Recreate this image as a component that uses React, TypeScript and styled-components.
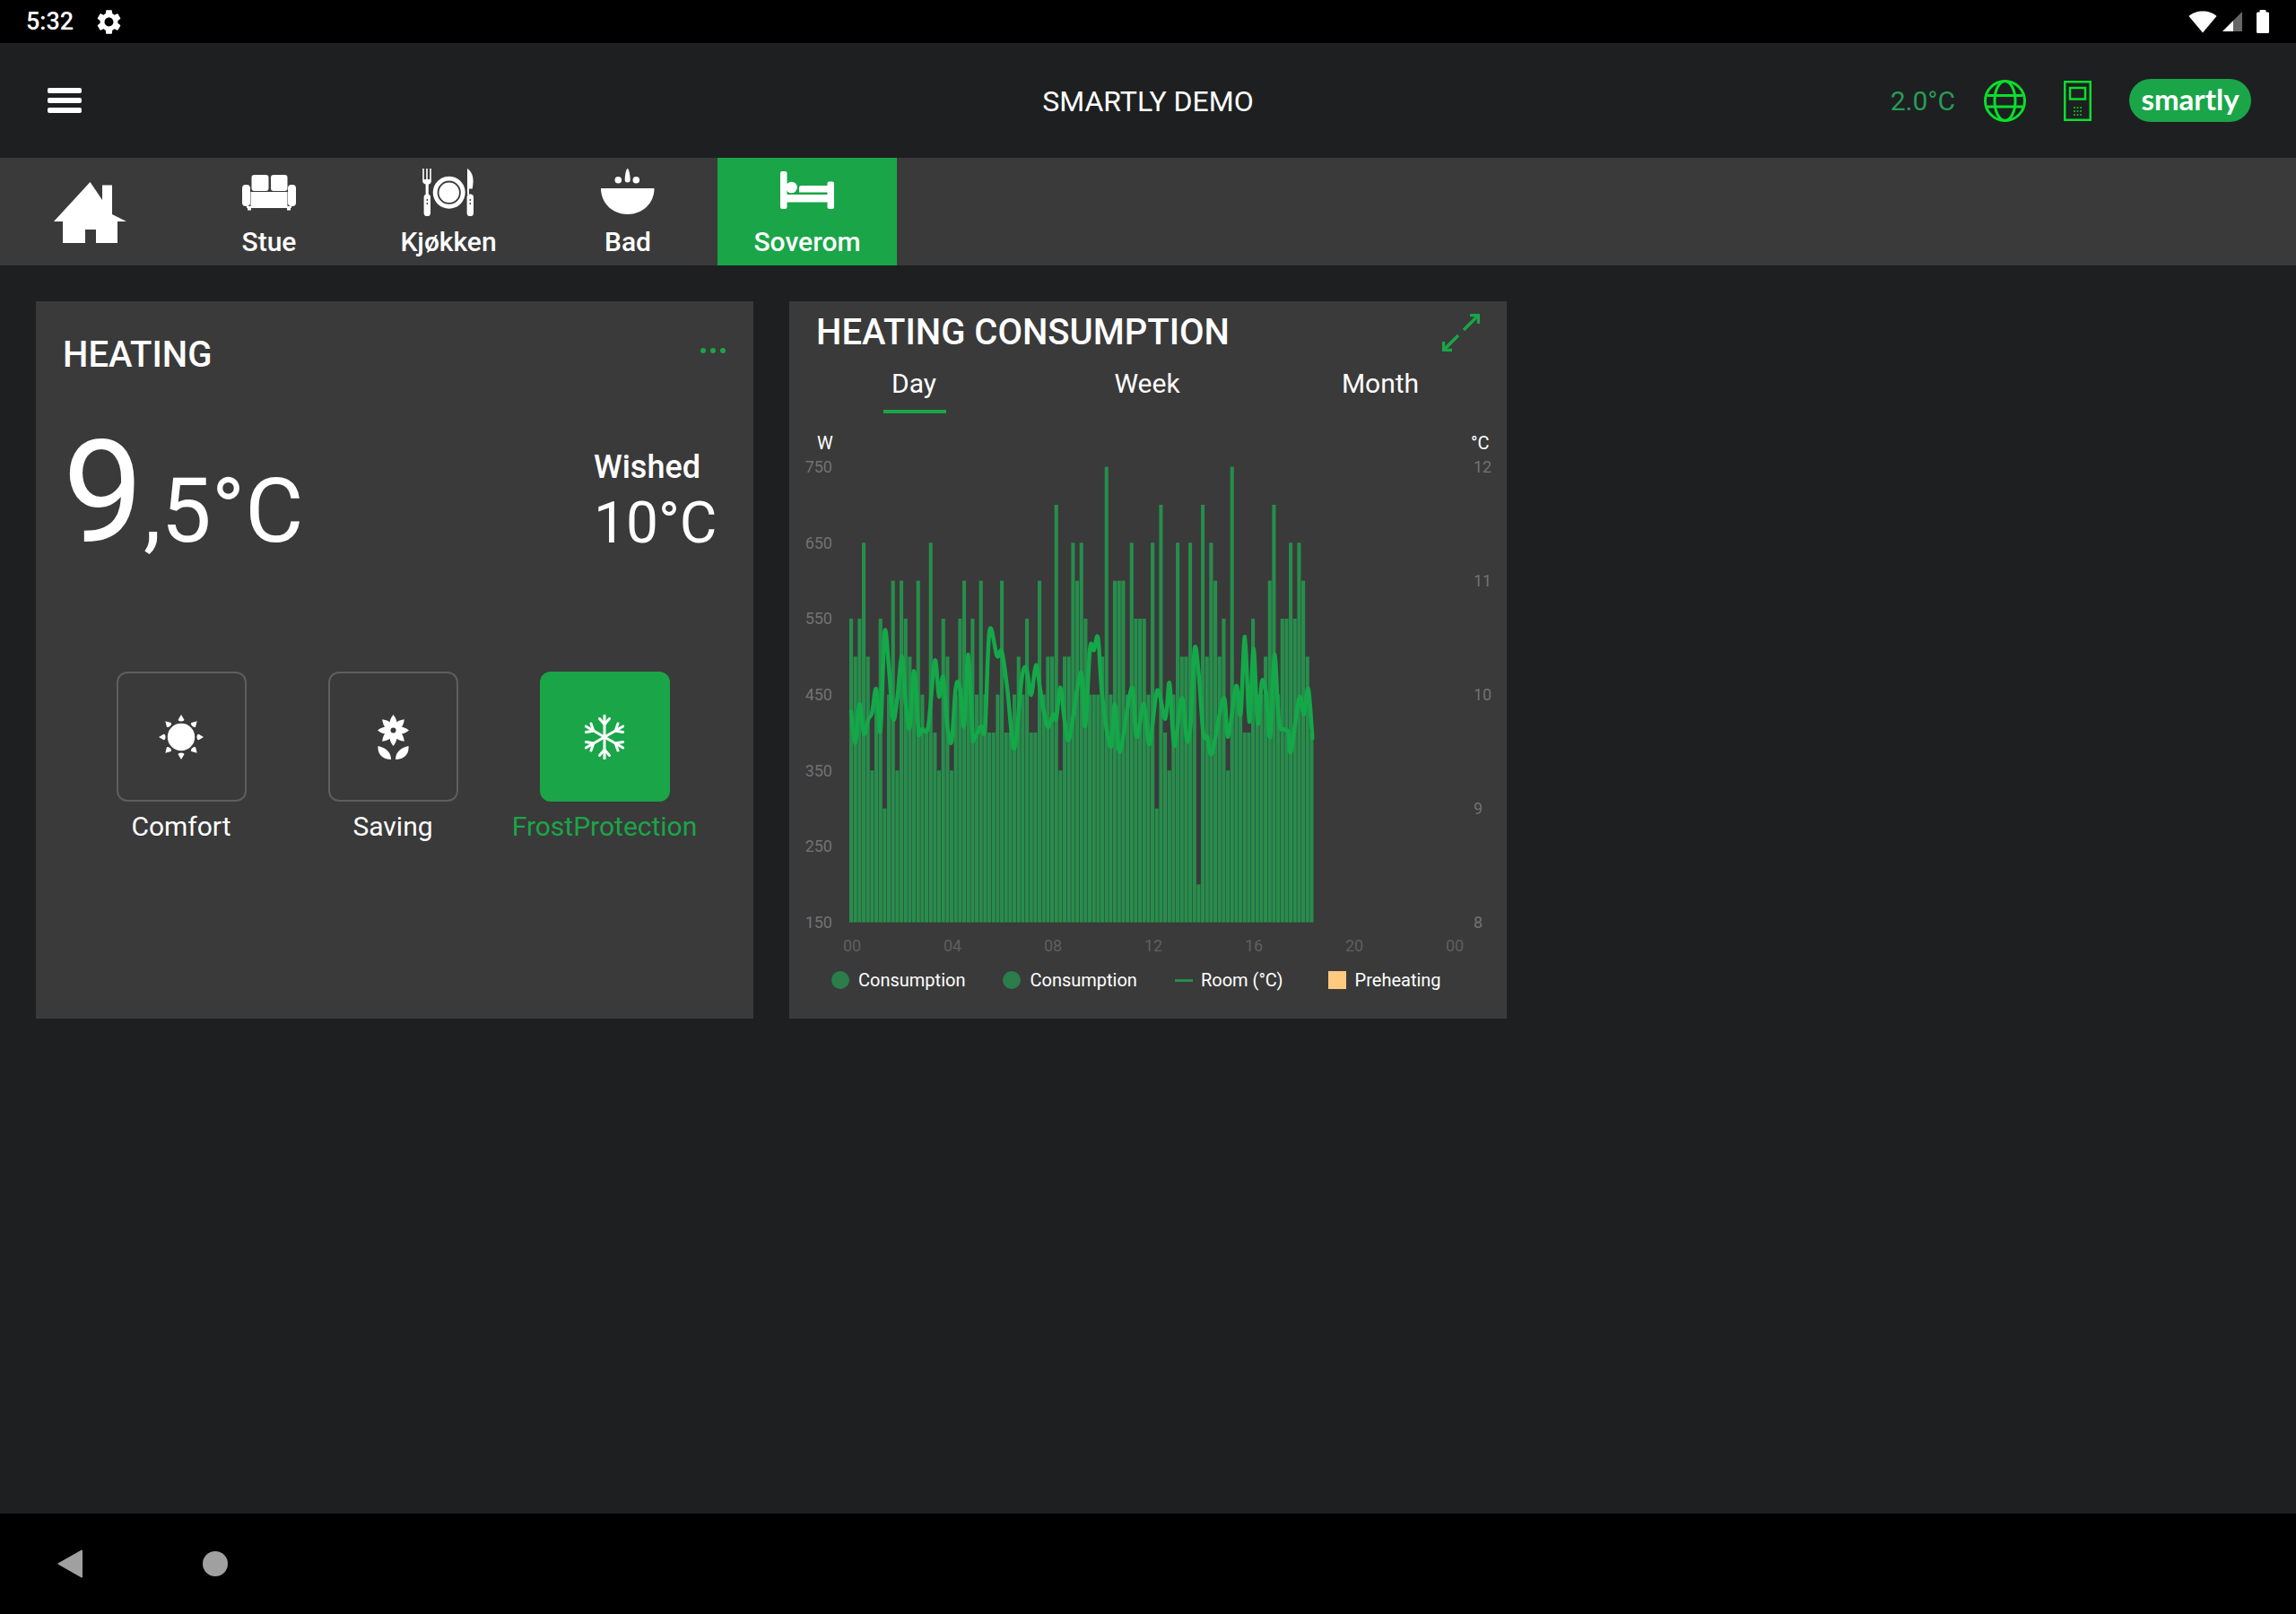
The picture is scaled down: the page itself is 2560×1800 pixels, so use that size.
import React from "react";
import styled, { createGlobalStyle } from "styled-components";

const GREEN = "#1aa548";
const NEON = "#0adf2c";
const CARD = "#3a3a3a";
const PAGE = "#1e1f21";

const Global = createGlobalStyle`
  html, body { margin: 0; padding: 0; background: ${PAGE}; }
  body { font-family: Roboto, "Liberation Sans", sans-serif; color: #fff; }
  * { box-sizing: border-box; }
`;

const Screen = styled.div`
  width: 2560px;
  height: 1800px;
  display: flex;
  flex-direction: column;
  background: ${PAGE};
  overflow: hidden;
`;

/* ---------- status bar ---------- */
const StatusBar = styled.div`
  height: 48px;
  background: #000;
  display: flex;
  align-items: center;
  padding: 0 30px 0 29px;
`;
const Clock = styled.span`
  font-size: 27px;
  font-weight: 500;
  line-height: 48px;
  width: 60px;
`;
const StatusLeft = styled.div`
  display: flex;
  align-items: center;
  gap: 16px;
  flex: 1;
`;
const StatusRight = styled.div`
  display: flex;
  align-items: center;
`;
const WifiSvg = styled.svg`
  width: 32px;
  height: 25px;
  margin-right: 6px;
`;
const SignalSvg = styled.svg`
  width: 22px;
  height: 22px;
  margin-right: 16px;
`;
const BatterySvg = styled.svg`
  width: 14px;
  height: 26px;
`;

/* ---------- app bar ---------- */
const AppBar = styled.header`
  height: 128px;
  display: grid;
  grid-template-columns: 1fr auto 1fr;
  align-items: center;
  padding: 0 50px;
`;
const Burger = styled.div`
  display: flex;
  flex-direction: column;
  gap: 5px;
  width: 38px;
  margin-left: 3px;
`;
const BurgerBar = styled.span`
  display: block;
  height: 6px;
  border-radius: 2px;
  background: #fff;
`;
const AppTitle = styled.h1`
  margin: 2px 0 0;
  font-size: 32px;
  font-weight: 400;
  line-height: 40px;
`;
const AppActions = styled.div`
  display: flex;
  align-items: center;
  justify-content: flex-end;
`;
const OutdoorTemp = styled.span`
  font-size: 30px;
  color: #279c55;
  margin-right: 32px;
`;
const GlobeSvg = styled.svg`
  width: 47px;
  height: 47px;
  margin-right: 42px;
`;
const DeviceSvg = styled.svg`
  width: 31px;
  height: 45px;
  margin-right: 42px;
`;
const LogoPill = styled.div`
  width: 136px;
  height: 48px;
  border-radius: 24px;
  background: ${GREEN};
  display: flex;
  align-items: center;
  justify-content: center;
  font-family: Lato, Roboto, sans-serif;
  font-weight: 700;
  font-size: 33px;
  line-height: 48px;
  padding-bottom: 5px;
`;

/* ---------- room tabs ---------- */
const RoomBar = styled.nav`
  height: 120px;
  background: ${CARD};
  display: flex;
`;
const RoomTab = styled.div<{ $active?: boolean }>`
  width: 200px;
  display: flex;
  flex-direction: column;
  align-items: center;
  padding-top: 10px;
  background: ${(p) => (p.$active ? GREEN : "transparent")};
`;
const HomeTab = styled(RoomTab)`
  padding-top: 0;
  justify-content: center;
`;
const RoomIcon = styled.svg`
  width: 60px;
  height: 56px;
`;
const HomeIcon = styled.svg`
  width: 81px;
  height: 68px;
  margin-top: 2px;
`;
const RoomLabel = styled.span`
  margin-top: 8px;
  font-size: 30px;
  font-weight: 500;
  line-height: 40px;
`;

/* ---------- content ---------- */
const Content = styled.main`
  flex: 1;
  display: flex;
  align-items: flex-start;
  gap: 40px;
  padding: 40px;
`;
const Card = styled.section`
  width: 800px;
  height: 800px;
  background: ${CARD};
  display: flex;
  flex-direction: column;
`;
const HeatingHead = styled.div`
  display: flex;
  justify-content: space-between;
  margin-top: 36px;
  padding: 0 31px 0 30px;
`;
const CardTitle = styled.h2`
  margin: 0;
  font-size: 40px;
  font-weight: 500;
  line-height: 48px;
`;
const Dots = styled.div`
  display: flex;
  gap: 5px;
  padding-top: 16px;
`;
const Dot = styled.span`
  width: 6px;
  height: 6px;
  border-radius: 50%;
  background: ${GREEN};
`;
const TempRow = styled.div`
  display: flex;
  align-items: flex-end;
  margin-top: 50px;
  padding-left: 30px;
`;
const Current = styled.div`
  font-size: 160px;
  line-height: 160px;
  font-weight: 400;
  white-space: nowrap;
`;
const CurrentRest = styled.span`
  font-size: 100px;
  line-height: 100px;
`;
const Wish = styled.div`
  margin-left: auto;
  width: 178px;
  margin-bottom: 14px;
`;
const WishLabel = styled.div`
  font-size: 36px;
  font-weight: 500;
  line-height: 36px;
  margin-bottom: 13px;
`;
const WishValue = styled.div`
  font-size: 64px;
  font-weight: 400;
  line-height: 64px;
`;
const ModeRow = styled.div`
  display: grid;
  grid-template-columns: repeat(3, 236px);
  margin-top: 119px;
  padding-left: 44px;
`;
const Mode = styled.div`
  display: flex;
  flex-direction: column;
  align-items: center;
`;
const ModeBox = styled.div<{ $active?: boolean }>`
  width: 145px;
  height: 145px;
  border-radius: 12px;
  border: ${(p) => (p.$active ? "none" : "2.5px solid #5e5e5e")};
  background: ${(p) => (p.$active ? GREEN : "transparent")};
  display: flex;
  align-items: center;
  justify-content: center;
`;
const ModeLabel = styled.span<{ $active?: boolean }>`
  margin-top: 8px;
  font-size: 30px;
  line-height: 40px;
  color: ${(p) => (p.$active ? GREEN : "#fff")};
  white-space: nowrap;
`;
const SunSvg = styled.svg`
  width: 50px;
  height: 50px;
`;
const FlowerSvg = styled.svg`
  width: 35px;
  height: 50px;
`;
const SnowSvg = styled.svg`
  width: 44px;
  height: 50px;
`;

/* ---------- consumption card ---------- */
const ChartHead = styled.div`
  display: flex;
  justify-content: space-between;
  align-items: flex-start;
  padding: 11px 30px 0 30px;
  height: 62px;
`;
const ExpandSvg = styled.svg`
  width: 42px;
  height: 42px;
  margin-top: 3px;
`;
const RangeTabs = styled.div`
  display: grid;
  grid-template-columns: repeat(3, 260px);
  padding-left: 9px;
  height: 72px;
`;
const RangeTab = styled.div`
  display: flex;
  flex-direction: column;
  align-items: center;
`;
const RangeLabel = styled.span`
  font-size: 30px;
  line-height: 60px;
`;
const RangeMark = styled.span`
  width: 70px;
  height: 3.5px;
  margin-top: -1px;
  margin-left: 2px;
  background: ${GREEN};
`;
const ChartSvg = styled.svg`
  display: block;
  width: 800px;
  height: 610px;
`;
const AxisUnit = styled.text`
  font-size: 20px;
  fill: #fff;
  dominant-baseline: central;
`;
const AxisValue = styled.text`
  font-size: 18px;
  fill: #727272;
  dominant-baseline: central;
`;
const AxisHour = styled(AxisValue)`
  fill: #5f5f5f;
  text-anchor: middle;
`;
const Legend = styled.div`
  display: flex;
  align-items: center;
  gap: 42px;
  padding-left: 47px;
  margin-top: -2px;
  height: 30px;
`;
const LegendItem = styled.div`
  display: flex;
  align-items: center;
  gap: 10px;
  font-size: 20px;
  line-height: 30px;
  white-space: nowrap;
`;
const LastLegendItem = styled(LegendItem)`
  margin-left: 8px;
`;
const LegendDot = styled.span`
  width: 20px;
  height: 20px;
  border-radius: 50%;
  background: #2b7d4b;
`;
const LegendLine = styled.span`
  width: 20px;
  height: 3px;
  margin-right: -1px;
  background: #2a8a4c;
`;
const LegendSquare = styled.span`
  width: 20px;
  height: 20px;
  background: #fdca80;
`;

/* ---------- nav bar ---------- */
const NavBar = styled.footer`
  height: 112px;
  background: #000;
  display: flex;
  align-items: center;
  padding-left: 64px;
  gap: 134px;
`;
const BackSvg = styled.svg`
  width: 28px;
  height: 32px;
`;
const HomeDot = styled.span`
  width: 28px;
  height: 28px;
  border-radius: 50%;
  background: #a0a0a0;
`;

/* ---------- data ---------- */
const BARS = [
  550, 500, 550, 650, 500, 350, 450, 550, 300, 450, 600, 350, 600, 550, 500, 450, 600, 450, 400, 650,
  400, 350, 550, 500, 350, 450, 550, 600, 500, 550, 450, 600, 450, 400, 400, 450, 600, 400, 400, 450,
  500, 450, 550, 400, 400, 600, 450, 500, 500, 700, 350, 500, 500, 650, 600, 650, 550, 450, 450, 450,
  500, 750, 450, 600, 600, 600, 450, 650, 550, 550, 550, 450, 650, 300, 700, 400, 350, 450, 650, 500,
  500, 650, 500, 200, 700, 500, 650, 600, 500, 550, 350, 750, 450, 450, 400, 400, 550, 450, 450, 500,
  600, 700, 450, 550, 550, 650, 550, 650, 600, 500, 400,
];

const LINE_A: [number, number][] = [
  [27, 850], [41, 955], [55, 825], [70, 925], [85, 875], [97, 855], [111, 775], [125, 915], [139, 585],
  [153, 700], [167, 875], [181, 810], [197, 665], [209, 820], [223, 905], [237, 715], [251, 900], [253, 930],
  [265, 910], [285, 900], [307, 680], [321, 800], [335, 735], [349, 900], [363, 950], [377, 770], [391, 770],
  [405, 900], [419, 660], [433, 920], [437, 945], [461, 900], [475, 905], [490, 580], [515, 665], [531, 650],
  [550, 780], [573, 975], [597, 745], [613, 705], [629, 795], [645, 695], [660, 780], [683, 900], [703, 860],
  [713, 875], [727, 770], [741, 880], [757, 940], [795, 720],
];
const LINE_B: [number, number][] = [
  [15, 900], [31, 640], [44, 645], [58, 605], [72, 800], [100, 970], [114, 825], [131, 985], [170, 770],
  [187, 935], [211, 825], [230, 960], [256, 780], [283, 875], [297, 755], [313, 965], [338, 805], [355, 945],
  [367, 900], [381, 640], [395, 730], [410, 925], [423, 935], [439, 990], [478, 805], [493, 935], [520, 765],
  [535, 860], [549, 600], [564, 885], [578, 640], [592, 890], [606, 750], [620, 790], [634, 935], [648, 660],
  [663, 885], [680, 910], [695, 920], [703, 985], [731, 805], [747, 860], [761, 775], [775, 940],
];
const LINE_POINTS: [number, number][] = [
  ...LINE_A.map(([x, y]): [number, number] => [940 + x / 3, 510 + y / 3]),
  ...LINE_B.map(([x, y]): [number, number] => [1205 + x / 3, 510 + y / 3]),
];

function smoothPath(pts: [number, number][]): string {
  let d = `M${pts[0][0].toFixed(1)} ${pts[0][1].toFixed(1)}`;
  for (let i = 0; i < pts.length - 1; i++) {
    const p0 = pts[Math.max(0, i - 1)];
    const p1 = pts[i];
    const p2 = pts[i + 1];
    const p3 = pts[Math.min(pts.length - 1, i + 2)];
    const c1x = p1[0] + (p2[0] - p0[0]) / 6;
    const c1y = p1[1] + (p2[1] - p0[1]) / 6;
    const c2x = p2[0] - (p3[0] - p1[0]) / 6;
    const c2y = p2[1] - (p3[1] - p1[1]) / 6;
    d += `C${c1x.toFixed(1)} ${c1y.toFixed(1)} ${c2x.toFixed(1)} ${c2y.toFixed(1)} ${p2[0].toFixed(1)} ${p2[1].toFixed(1)}`;
  }
  return d;
}

const Y_BASE = 1028.6;
const Y_PER_W = 508 / 600;
const BAR_PITCH = 4.667;

const ANGLES = [0, 45, 90, 135, 180, 225, 270, 315];

const GEAR =
  "M19.14 12.94c.04-.3.06-.61.06-.94 0-.32-.02-.64-.07-.94l2.03-1.58c.18-.14.23-.41.12-.61l-1.92-3.32c-.12-.22-.37-.29-.59-.22l-2.39.96c-.5-.38-1.03-.7-1.62-.94l-.36-2.54c-.04-.24-.24-.41-.48-.41h-3.84c-.24 0-.43.17-.47.41l-.36 2.54c-.59.24-1.13.57-1.62.94l-2.39-.96c-.22-.08-.47 0-.59.22L2.74 8.87c-.12.21-.08.47.12.61l2.03 1.58c-.05.3-.09.63-.09.94s.02.64.07.94l-2.03 1.58c-.18.14-.23.41-.12.61l1.92 3.32c.12.22.37.29.59.22l2.39-.96c.5.38 1.03.7 1.62.94l.36 2.54c.05.24.24.41.48.41h3.84c.24 0 .44-.17.47-.41l.36-2.54c.59-.24 1.13-.56 1.62-.94l2.39.96c.22.08.47 0 .59-.22l1.92-3.32c.12-.22.07-.47-.12-.61l-2.01-1.58zM12 15.6c-1.98 0-3.6-1.62-3.6-3.6s1.62-3.6 3.6-3.6 3.6 1.62 3.6 3.6-1.62 3.6-3.6 3.6z";

const Gear = () => (
  <svg width="33" height="33" viewBox="0 0 24 24" fill="#fff">
    <path d={GEAR} />
  </svg>
);

const Sofa = () => (
  <RoomIcon viewBox="0 0 60 56" fill="#fff">
    <rect x="10.5" y="9" width="19" height="18" rx="3" />
    <rect x="32" y="9" width="18.5" height="18" rx="3" />
    <rect x="0" y="20" width="9" height="24" rx="4" />
    <rect x="51" y="20" width="9" height="24" rx="4" />
    <rect x="9.5" y="28" width="41" height="16" />
    <rect x="5" y="44" width="50" height="2" />
    <rect x="6" y="46" width="4" height="2.5" />
    <rect x="50" y="46" width="4" height="2.5" />
  </RoomIcon>
);

const Cutlery = () => (
  <RoomIcon viewBox="0 0 60 56" fill="#fff">
    <path d="M1.2 2h1.6v12h2.4V2h1.6v12h2.4V2h1.6v14c0 2-1.4 3.2-3 3.6V31H4.6V19.6C2.6 19 1.2 18 1.2 16z" />
    <rect x="2.6" y="30.5" width="7.4" height="24.5" rx="3.6" />
    <circle cx="6.3" cy="37" r="0.9" fill={CARD} />
    <circle cx="6.3" cy="41" r="0.9" fill={CARD} />
    <circle cx="30.7" cy="28.7" r="18" />
    <circle cx="30.7" cy="28.7" r="12.2" fill="none" stroke={CARD} strokeWidth="1.8" />
    <path d="M51 2c3.5 2 6.8 7 6.6 14-.1 3-.4 6-.9 8.5H53V31h-2z" />
    <rect x="50.6" y="30.5" width="7.4" height="24.5" rx="3.6" />
    <circle cx="54.3" cy="37" r="0.9" fill={CARD} />
    <circle cx="54.3" cy="41" r="0.9" fill={CARD} />
  </RoomIcon>
);

const Bowl = () => (
  <RoomIcon viewBox="0 0 60 56" fill="#fff">
    <path d="M0 24H59.5C59.5 41 46 53 29.7 53S0 41 0 24z" />
    <path d="M29.7 2c1.4 0 3 7 3 12.5a3 3 0 0 1-6 0C26.7 9 28.3 2 29.7 2z" />
    <circle cx="19.3" cy="14.7" r="3.8" />
    <circle cx="39.3" cy="14.7" r="3.8" />
  </RoomIcon>
);

const Bed = () => (
  <RoomIcon viewBox="0 0 60 56" fill="#fff">
    <rect x="0" y="5" width="7.5" height="42" rx="2" />
    <rect x="52.5" y="16.5" width="7.5" height="30.5" rx="2" />
    <rect x="0" y="31" width="60" height="8.5" />
    <circle cx="12.5" cy="23" r="6.3" />
    <path d="M21 28.5V23.5c0-1.5 1-2.5 2.5-2.5H53v7.5z" />
  </RoomIcon>
);

const Sun = () => (
  <SunSvg viewBox="0 0 50 50" fill="#fff">
    <circle cx="25" cy="25" r="15.2" />
    {ANGLES.map((a) => (
      <path key={a} d="M25 0l3.3 5.5c.3 1.2-1.3 2-3.3 2s-3.6-.8-3.3-2z" transform={`rotate(${a} 25 25)`} />
    ))}
  </SunSvg>
);

const Flower = () => (
  <FlowerSvg viewBox="0 0 35 50" fill="#fff">
    {ANGLES.map((a) => (
      <path key={a} d="M17.5 0c3 4 4 7 4 9.5 0 2.5-2 5-4 8-2-3-4-5.5-4-8C13.5 7 14.5 4 17.5 0z" transform={`rotate(${a} 17.5 17.5)`} />
    ))}
    <circle cx="17.5" cy="17.5" r="3" fill={CARD} />
    <path d="M.5 35C8 36.5 15 41 15 50 7 50-.5 45.5.5 35z" />
    <path d="M34.5 35C27 36.5 20 41 20 50c8 0 15.5-4.5 14.5-15z" />
  </FlowerSvg>
);

const Snowflake = () => (
  <SnowSvg viewBox="0 0 44 50" fill="none" stroke="#fff" strokeWidth="3" strokeLinecap="round">
    {[0, 60, 120, 180, 240, 300].map((a) => (
      <g key={a} transform={`rotate(${a} 22 25)`}>
        <path d="M22 25V1" />
        <path d="M16.5 4.5L22 11l5.5-6.5" />
      </g>
    ))}
  </SnowSvg>
);

const Chart = () => (
  <ChartSvg viewBox="880 470 800 610">
    <AxisUnit x="911" y="494">W</AxisUnit>
    <AxisUnit x="1640" y="494">°C</AxisUnit>
    {[750, 650, 550, 450, 350, 250, 150].map((v) => (
      <AxisValue key={v} x="928" y={Y_BASE - (v - 150) * Y_PER_W} textAnchor="end">
        {v}
      </AxisValue>
    ))}
    {[12, 11, 10, 9, 8].map((v) => (
      <AxisValue key={v} x="1643" y={Y_BASE - (v - 8) * 127}>
        {v}
      </AxisValue>
    ))}
    {["00", "04", "08", "12", "16", "20", "00"].map((h, i) => (
      <AxisHour key={i} x={950 + i * 112} y="1054">
        {h}
      </AxisHour>
    ))}
    {BARS.map((v, i) => (
      <rect
        key={i}
        x={947 + i * BAR_PITCH}
        y={Y_BASE - (v - 150) * Y_PER_W}
        width="4.1"
        height={(v - 150) * Y_PER_W}
        fill="#278d4c"
      />
    ))}
    <path d={smoothPath(LINE_POINTS)} fill="none" stroke="#14a849" strokeWidth="4.5" strokeLinejoin="round" strokeLinecap="round" />
  </ChartSvg>
);

export default function App() {
  return (
    <Screen>
      <Global />
      <StatusBar>
        <StatusLeft>
          <Clock>5:32</Clock>
          <Gear />
        </StatusLeft>
        <StatusRight>
          <WifiSvg viewBox="0 0 32 25" fill="#fff">
            <path d="M16 24.5L.5 6C4 2.5 10 .5 16 .5S28 2.5 31.5 6z" />
          </WifiSvg>
          <SignalSvg viewBox="0 0 22 22">
            <path d="M0 22L12 10V22z" fill="#fff" />
            <path d="M12 10L22 0V22H12z" fill="#666" />
          </SignalSvg>
          <BatterySvg viewBox="0 0 14 26" fill="#fff">
            <rect x="3.5" y="0" width="7" height="4" rx="1" />
            <rect x="0" y="2.5" width="14" height="23.5" rx="1.5" />
          </BatterySvg>
        </StatusRight>
      </StatusBar>

      <AppBar>
        <Burger>
          <BurgerBar />
          <BurgerBar />
          <BurgerBar />
        </Burger>
        <AppTitle>SMARTLY DEMO</AppTitle>
        <AppActions>
          <OutdoorTemp>2.0°C</OutdoorTemp>
          <GlobeSvg viewBox="0 0 47 47" fill="none" stroke={NEON} strokeWidth="3">
            <circle cx="23.5" cy="23.5" r="22" />
            <ellipse cx="23.5" cy="23.5" rx="11.5" ry="22" />
            <path d="M4 17.5h39M4 30h39" />
          </GlobeSvg>
          <DeviceSvg viewBox="0 0 31 45" fill="none" stroke={NEON} strokeWidth="2.5">
            <rect x="1.25" y="1.25" width="28.5" height="42.5" />
            <rect x="7" y="8" width="17" height="12.5" />
            <path d="M11 30h9M11 34h9M11 38h9" strokeWidth="1.6" strokeDasharray="1.8 1.8" />
          </DeviceSvg>
          <LogoPill>smartly</LogoPill>
        </AppActions>
      </AppBar>

      <RoomBar>
        <HomeTab>
          <HomeIcon viewBox="0 0 81 68" fill="#fff">
            <path d="M40.5 0L54 20V3.5h11V36L81 44H71V68H47V53H35V68H10V44H0z" />
          </HomeIcon>
        </HomeTab>
        <RoomTab>
          <Sofa />
          <RoomLabel>Stue</RoomLabel>
        </RoomTab>
        <RoomTab>
          <Cutlery />
          <RoomLabel>Kjøkken</RoomLabel>
        </RoomTab>
        <RoomTab>
          <Bowl />
          <RoomLabel>Bad</RoomLabel>
        </RoomTab>
        <RoomTab $active>
          <Bed />
          <RoomLabel>Soverom</RoomLabel>
        </RoomTab>
      </RoomBar>

      <Content>
        <Card>
          <HeatingHead>
            <CardTitle>HEATING</CardTitle>
            <Dots>
              <Dot />
              <Dot />
              <Dot />
            </Dots>
          </HeatingHead>
          <TempRow>
            <Current>
              9<CurrentRest>,5°C</CurrentRest>
            </Current>
            <Wish>
              <WishLabel>Wished</WishLabel>
              <WishValue>10°C</WishValue>
            </Wish>
          </TempRow>
          <ModeRow>
            <Mode>
              <ModeBox>
                <Sun />
              </ModeBox>
              <ModeLabel>Comfort</ModeLabel>
            </Mode>
            <Mode>
              <ModeBox>
                <Flower />
              </ModeBox>
              <ModeLabel>Saving</ModeLabel>
            </Mode>
            <Mode>
              <ModeBox $active>
                <Snowflake />
              </ModeBox>
              <ModeLabel $active>FrostProtection</ModeLabel>
            </Mode>
          </ModeRow>
        </Card>

        <Card>
          <ChartHead>
            <CardTitle>HEATING CONSUMPTION</CardTitle>
            <ExpandSvg viewBox="0 0 42 42" fill="none" stroke={GREEN} strokeWidth="3.5">
              <path d="M41 1L24 18M18 24L1 41" />
              <path d="M31 1.5H40.5V11M1.5 31V40.5H11" />
            </ExpandSvg>
          </ChartHead>
          <RangeTabs>
            <RangeTab>
              <RangeLabel>Day</RangeLabel>
              <RangeMark />
            </RangeTab>
            <RangeTab>
              <RangeLabel>Week</RangeLabel>
            </RangeTab>
            <RangeTab>
              <RangeLabel>Month</RangeLabel>
            </RangeTab>
          </RangeTabs>
          <Chart />
          <Legend>
            <LegendItem>
              <LegendDot />
              Consumption
            </LegendItem>
            <LegendItem>
              <LegendDot />
              Consumption
            </LegendItem>
            <LegendItem>
              <LegendLine />
              Room (°C)
            </LegendItem>
            <LastLegendItem>
              <LegendSquare />
              Preheating
            </LastLegendItem>
          </Legend>
        </Card>
      </Content>

      <NavBar>
        <BackSvg viewBox="0 0 28 32" fill="#a0a0a0" stroke="#a0a0a0" strokeWidth="2" strokeLinejoin="round">
          <path d="M27 1.5V30.5L1.5 16z" />
        </BackSvg>
        <HomeDot />
      </NavBar>
    </Screen>
  );
}
